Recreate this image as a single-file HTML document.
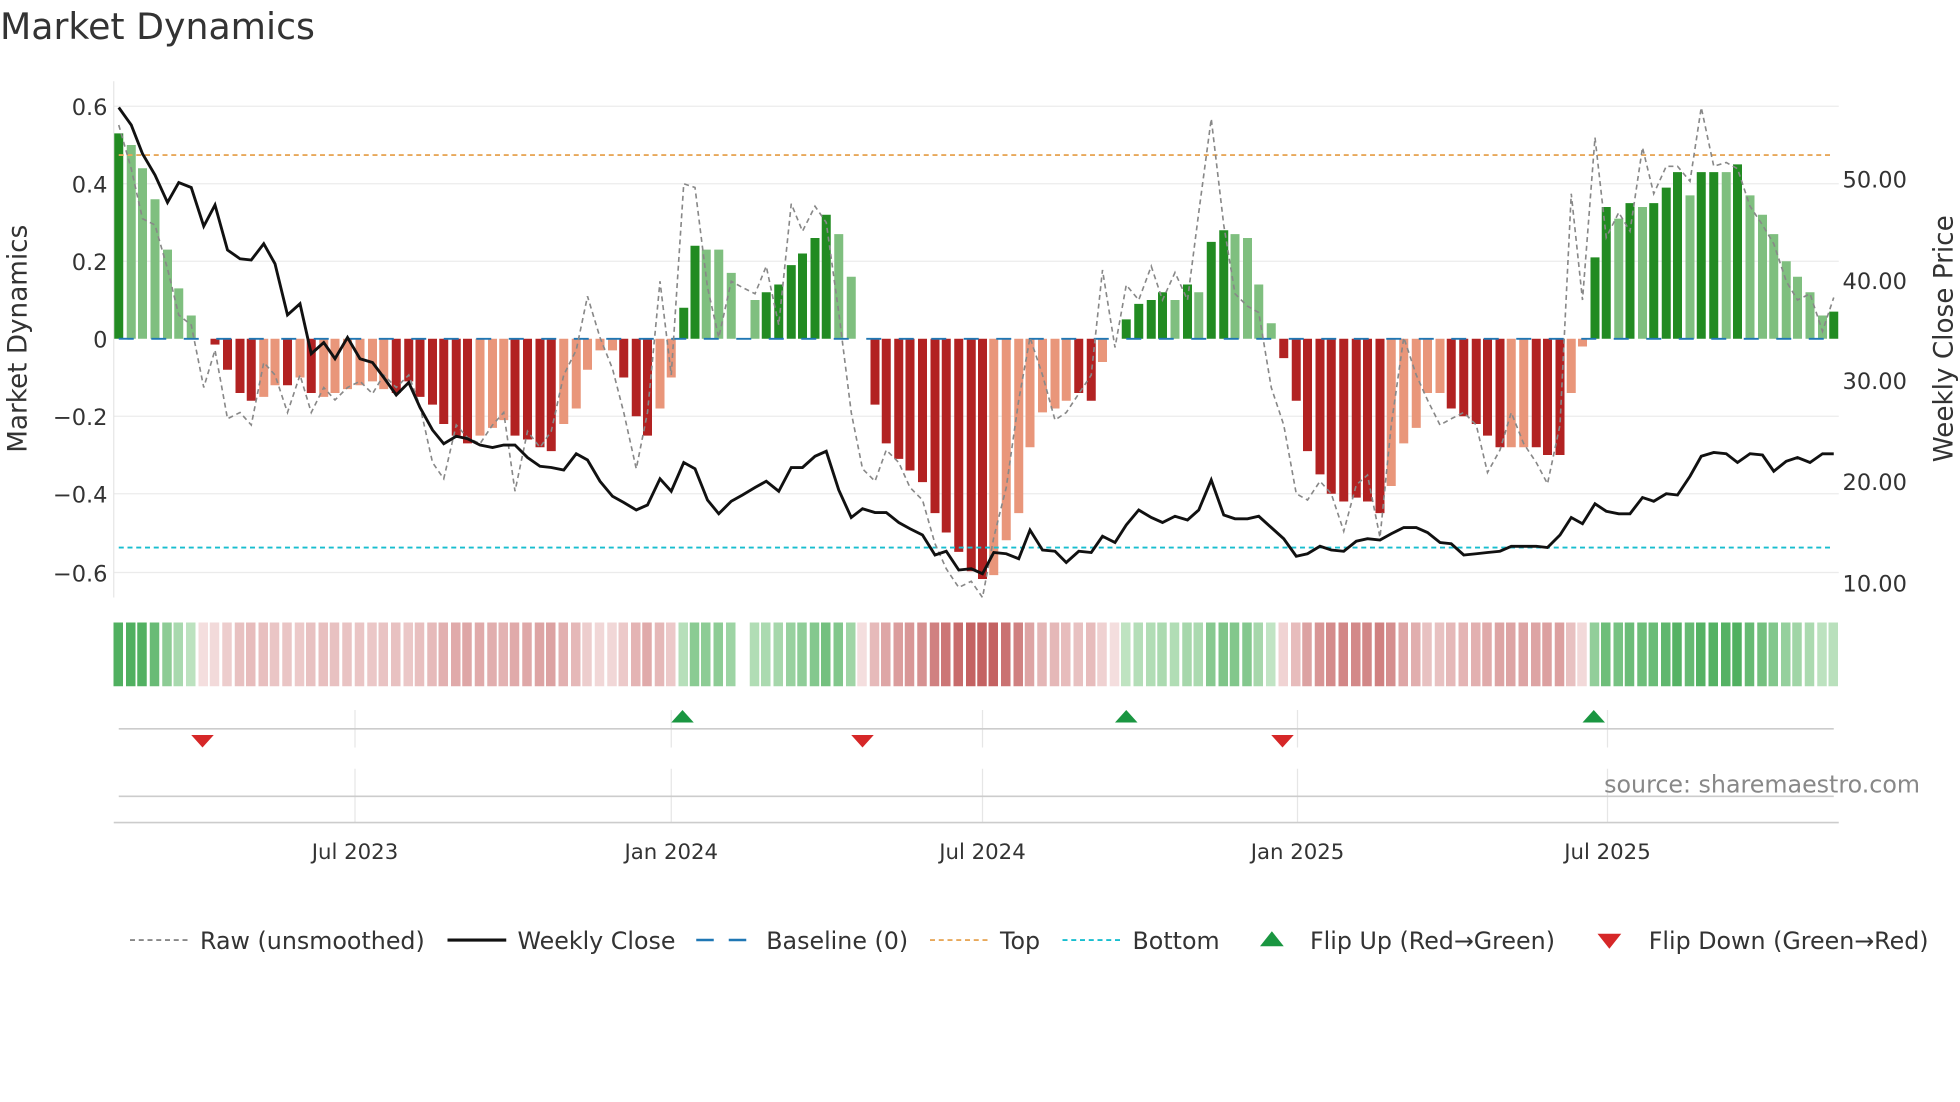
<!DOCTYPE html>
<html><head><meta charset="utf-8"><style>
html,body{margin:0;padding:0;background:#fff;}
svg{display:block;font-family:"DejaVu Sans","Liberation Sans",sans-serif;}
</style></head><body>
<svg id="s" width="1960" height="1102" viewBox="0 0 1568 881.6" xmlns="http://www.w3.org/2000/svg">
<rect width="1568" height="882" fill="#fff"/>
<text x="0" y="31" font-size="29" fill="#333">Market Dynamics</text>
<g id="grid" stroke="#ebebeb" stroke-width="1">
<line x1="91" x2="1471" y1="85" y2="85"/><line x1="91" x2="1471" y1="147" y2="147"/><line x1="91" x2="1471" y1="209" y2="209"/><line x1="91" x2="1471" y1="333" y2="333"/><line x1="91" x2="1471" y1="395" y2="395"/><line x1="91" x2="1471" y1="458" y2="458"/>
</g>
<line x1="91" x2="91" y1="65" y2="478" stroke="#e6e6e6"/>
<g id="bars"></g>
<line x1="95" x2="1467" y1="271" y2="271" stroke="#1f77b4" stroke-width="1.5" stroke-dasharray="12,14"/>
<line x1="95" x2="1467" y1="124" y2="124" stroke="#e8a85a" stroke-width="1.5" stroke-dasharray="4,3"/>
<line x1="95" x2="1467" y1="438" y2="438" stroke="#17becf" stroke-width="1.5" stroke-dasharray="4,3"/>
<polyline id="raw" fill="none" stroke="#888" stroke-width="1.3" stroke-dasharray="4,3"/>
<polyline id="close" fill="none" stroke="#111" stroke-width="2.3"/>
<g font-size="18" fill="#333" text-anchor="end">
<text x="86" y="92">0.6</text><text x="86" y="154">0.4</text><text x="86" y="216">0.2</text><text x="86" y="278">0</text><text x="86" y="340">−0.2</text><text x="86" y="402">−0.4</text><text x="86" y="465">−0.6</text>
</g>
<g font-size="18" fill="#333">
<text x="1474" y="150">50.00</text><text x="1474" y="231">40.00</text><text x="1474" y="311">30.00</text><text x="1474" y="392">20.00</text><text x="1474" y="473">10.00</text>
</g>
<text transform="translate(21,271) rotate(-90)" font-size="21" fill="#333" text-anchor="middle">Market Dynamics</text>
<text transform="translate(1562,271) rotate(-90)" font-size="21" fill="#333" text-anchor="middle">Weekly Close Price</text>
<g id="heat"></g>
<g stroke="#e6e6e6"><line x1="284" x2="284" y1="568" y2="598"/><line x1="537" x2="537" y1="568" y2="598"/><line x1="786" x2="786" y1="568" y2="598"/><line x1="1038" x2="1038" y1="568" y2="598"/><line x1="1286" x2="1286" y1="568" y2="598"/>
<line x1="284" x2="284" y1="615" y2="658"/><line x1="537" x2="537" y1="615" y2="658"/><line x1="786" x2="786" y1="615" y2="658"/><line x1="1038" x2="1038" y1="615" y2="658"/><line x1="1286" x2="1286" y1="615" y2="658"/></g>
<line x1="95" x2="1467" y1="583" y2="583" stroke="#ccc" stroke-width="1.3"/>
<line x1="95" x2="1467" y1="637" y2="637" stroke="#ccc" stroke-width="1.3"/>
<line x1="91" x2="1471" y1="658" y2="658" stroke="#ccc" stroke-width="1.3"/>
<g fill="#d62728"><path d="M153 588h18l-9 10z"/><path d="M681 588h18l-9 10z"/><path d="M1017 588h18l-9 10z"/></g>
<g fill="#1a9641"><path d="M537 578h18l-9-10z"/><path d="M892 578h18l-9-10z"/><path d="M1266 578h18l-9-10z"/></g>
<text x="1536" y="634" font-size="19" fill="#888" text-anchor="end">source: sharemaestro.com</text>
<g font-size="17" fill="#333" text-anchor="middle">
<text x="284" y="687">Jul 2023</text><text x="537" y="687">Jan 2024</text><text x="786" y="687">Jul 2024</text><text x="1038" y="687">Jan 2025</text><text x="1286" y="687">Jul 2025</text>
</g>
<g font-size="19" fill="#333">
<line x1="104" x2="150" y1="752" y2="752" stroke="#888" stroke-width="1.5" stroke-dasharray="4,3"/><text x="160" y="759">Raw (unsmoothed)</text>
<line x1="358" x2="405" y1="752" y2="752" stroke="#111" stroke-width="2.5"/><text x="414" y="759">Weekly Close</text>
<line x1="557" x2="604" y1="752" y2="752" stroke="#1f77b4" stroke-width="2" stroke-dasharray="14,12"/><text x="613" y="759">Baseline (0)</text>
<line x1="744" x2="790" y1="752" y2="752" stroke="#e8a85a" stroke-width="1.5" stroke-dasharray="4,3"/><text x="800" y="759">Top</text>
<line x1="850" x2="896" y1="752" y2="752" stroke="#17becf" stroke-width="1.5" stroke-dasharray="4,3"/><text x="906" y="759">Bottom</text>
<path d="M1008 757h19l-9.5-12z" fill="#1a9641"/><text x="1048" y="759">Flip Up (Red→Green)</text>
<path d="M1278 747h19l-9.5 12z" fill="#d62728"/><text x="1319" y="759">Flip Down (Green→Red)</text>
</g>
</svg>
<script>
var B="95:0.53:1,105:0.5:0,114:0.44:0,124:0.36:0,134:0.23:0,143:0.13:0,153:0.06:0,163:0:0,172:-0.015:1,182:-0.08:1,192:-0.14:1,201:-0.16:1,211:-0.15:0,220:-0.12:0,230:-0.12:1,240:-0.1:0,249:-0.14:1,259:-0.15:0,268:-0.14:0,278:-0.13:0,288:-0.12:0,298:-0.11:0,307:-0.13:0,317:-0.14:1,327:-0.11:1,336:-0.15:1,346:-0.17:1,355:-0.22:1,365:-0.25:1,374:-0.27:1,384:-0.25:0,394:-0.23:0,403:-0.21:0,412:-0.25:1,422:-0.26:1,432:-0.28:1,441:-0.29:1,451:-0.22:0,461:-0.18:0,470:-0.08:0,480:-0.03:0,490:-0.03:0,499:-0.1:1,509:-0.2:1,518:-0.25:1,528:-0.18:0,537:-0.1:0,547:0.08:1,556:0.24:1,565:0.23:0,575:0.23:0,585:0.17:0,594:0:9,604:0.1:0,613:0.12:1,623:0.14:1,633:0.19:1,642:0.22:1,652:0.26:1,661:0.32:1,671:0.27:0,681:0.16:0,690:0:0,700:-0.17:1,709:-0.27:1,719:-0.31:1,728:-0.34:1,738:-0.37:1,748:-0.45:1,757:-0.5:1,767:-0.55:1,777:-0.6:1,786:-0.62:1,795:-0.61:0,805:-0.52:0,815:-0.45:0,824:-0.28:0,834:-0.19:0,844:-0.18:0,853:-0.16:0,863:-0.14:1,873:-0.16:1,882:-0.06:0,892:0:0,901:0.05:1,911:0.09:1,921:0.1:1,930:0.12:1,940:0.1:0,950:0.14:1,959:0.12:0,969:0.25:1,979:0.28:1,988:0.27:0,998:0.26:0,1007:0.14:0,1017:0.04:0,1027:-0.05:1,1037:-0.16:1,1046:-0.29:1,1056:-0.35:1,1065:-0.4:1,1075:-0.42:1,1085:-0.41:1,1094:-0.42:1,1104:-0.45:1,1113:-0.38:0,1123:-0.27:0,1133:-0.23:0,1142:-0.14:0,1152:-0.14:0,1161:-0.18:1,1171:-0.2:1,1181:-0.22:1,1190:-0.25:1,1200:-0.28:1,1209:-0.28:0,1219:-0.28:0,1229:-0.28:1,1238:-0.3:1,1248:-0.3:1,1257:-0.14:0,1266:-0.02:0,1276:0.21:1,1285:0.34:1,1295:0.31:0,1304:0.35:1,1314:0.34:0,1323:0.35:1,1333:0.39:1,1342:0.43:1,1352:0.37:0,1361:0.43:1,1371:0.43:1,1381:0.43:0,1390:0.45:1,1400:0.37:0,1410:0.32:0,1419:0.27:0,1429:0.2:0,1438:0.16:0,1448:0.12:0,1458:0.06:0,1467:0.07:1";
var bars="",heat="";
B.split(",").forEach(function(s){var p=s.split(":"),x=+p[0],v=+p[1],f=+p[2];
 var h=Math.abs(v)*310,y=v>0?271-h:271;
 var c=v>0?(f?"#228b22":"#7fbf7f"):(f?"#b22222":"#e9967a");
 if(v!=0)bars+='<rect x="'+(x-3.6)+'" y="'+y+'" width="7.2" height="'+h+'" fill="'+c+'"/>';
 if(f==9)return;
 var t,r,g,b;
 if(v>0){t=Math.min(1,v/0.45);r=205+(80-205)*t;g=234+(176-234)*t;b=206+(96-206)*t;}
 else{t=Math.min(1,-v/0.6);r=244+(196-244)*t;g=222+(98-222)*t;b=222+(98-222)*t;}
 heat+='<rect x="'+(x-4.2)+'" y="498" width="7.6" height="51" fill="rgb('+(r|0)+','+(g|0)+','+(b|0)+')"/>';
});
document.getElementById("bars").innerHTML=bars;
document.getElementById("heat").innerHTML=heat;
document.getElementById("close").setAttribute("points","95,86 105,100 114,123 124,140 134,162 143,146 153,150 163,181 172,164 182,200 192,207 201,208 211,195 220,211 230,252 240,243 249,283 259,274 268,287 278,270 288,287 298,290 307,302 317,316 327,306 336,326 346,344 355,355 365,349 374,351 384,356 394,358 403,356 412,356 422,366 432,373 441,374 451,376 461,363 470,368 480,385 490,397 499,402 509,408 518,404 528,383 537,393 547,370 556,375 566,400 575,411 585,401 594,396 604,390 613,385 623,393 633,374 642,374 652,365 661,361 671,392 681,414 690,407 700,410 709,410 719,418 728,423 738,428 748,444 757,441 767,456 777,455 786,459 795,442 805,443 815,447 824,424 834,440 844,441 853,450 863,441 873,442 882,429 892,434 901,420 911,408 921,414 930,418 940,413 950,416 959,408 969,384 979,412 988,415 998,415 1007,413 1017,422 1027,431 1037,445 1046,443 1056,437 1065,440 1075,441 1085,433 1094,431 1104,432 1113,427 1123,422 1133,422 1142,426 1152,434 1161,435 1171,444 1181,443 1190,442 1200,441 1209,437 1219,437 1229,437 1238,438 1248,428 1257,414 1266,419 1276,403 1285,409 1295,411 1304,411 1314,398 1323,401 1333,395 1342,396 1352,381 1361,365 1371,362 1381,363 1390,370 1400,363 1410,364 1419,377 1429,369 1438,366 1448,370 1458,363 1467,363");
document.getElementById("raw").setAttribute("points","95,100 105,135 114,175 124,180 134,215 143,252 153,260 163,310 172,280 182,335 192,330 201,340 211,290 220,300 230,330 240,300 249,330 259,310 268,320 278,310 288,305 298,315 307,300 317,310 327,300 336,325 346,370 355,383 365,340 374,350 384,355 394,340 403,330 412,393 422,345 432,358 441,345 451,300 461,280 470,237 480,270 490,295 499,330 509,375 518,330 528,225 537,300 547,147 556,150 566,230 575,270 585,225 594,230 604,235 613,213 623,260 633,163 642,185 652,165 661,178 671,250 681,330 690,375 700,385 709,360 719,370 728,390 738,400 748,435 757,455 767,470 777,465 786,478 795,430 805,390 815,320 824,270 834,300 844,336 853,330 863,315 873,300 882,216 892,278 901,228 911,240 921,213 930,240 940,218 950,240 959,170 969,95 979,180 988,235 998,245 1007,250 1017,310 1027,340 1037,395 1046,400 1056,385 1065,395 1075,425 1085,388 1094,380 1104,430 1113,340 1123,270 1133,300 1142,320 1152,340 1161,335 1171,330 1181,340 1190,378 1200,360 1209,330 1219,355 1229,370 1238,387 1248,340 1257,155 1266,240 1276,110 1285,190 1295,170 1304,185 1314,118 1323,155 1333,133 1342,133 1352,145 1361,86 1371,133 1381,130 1390,135 1400,165 1410,180 1419,195 1429,225 1438,240 1448,235 1458,265 1467,238");
</script>
</body></html>
